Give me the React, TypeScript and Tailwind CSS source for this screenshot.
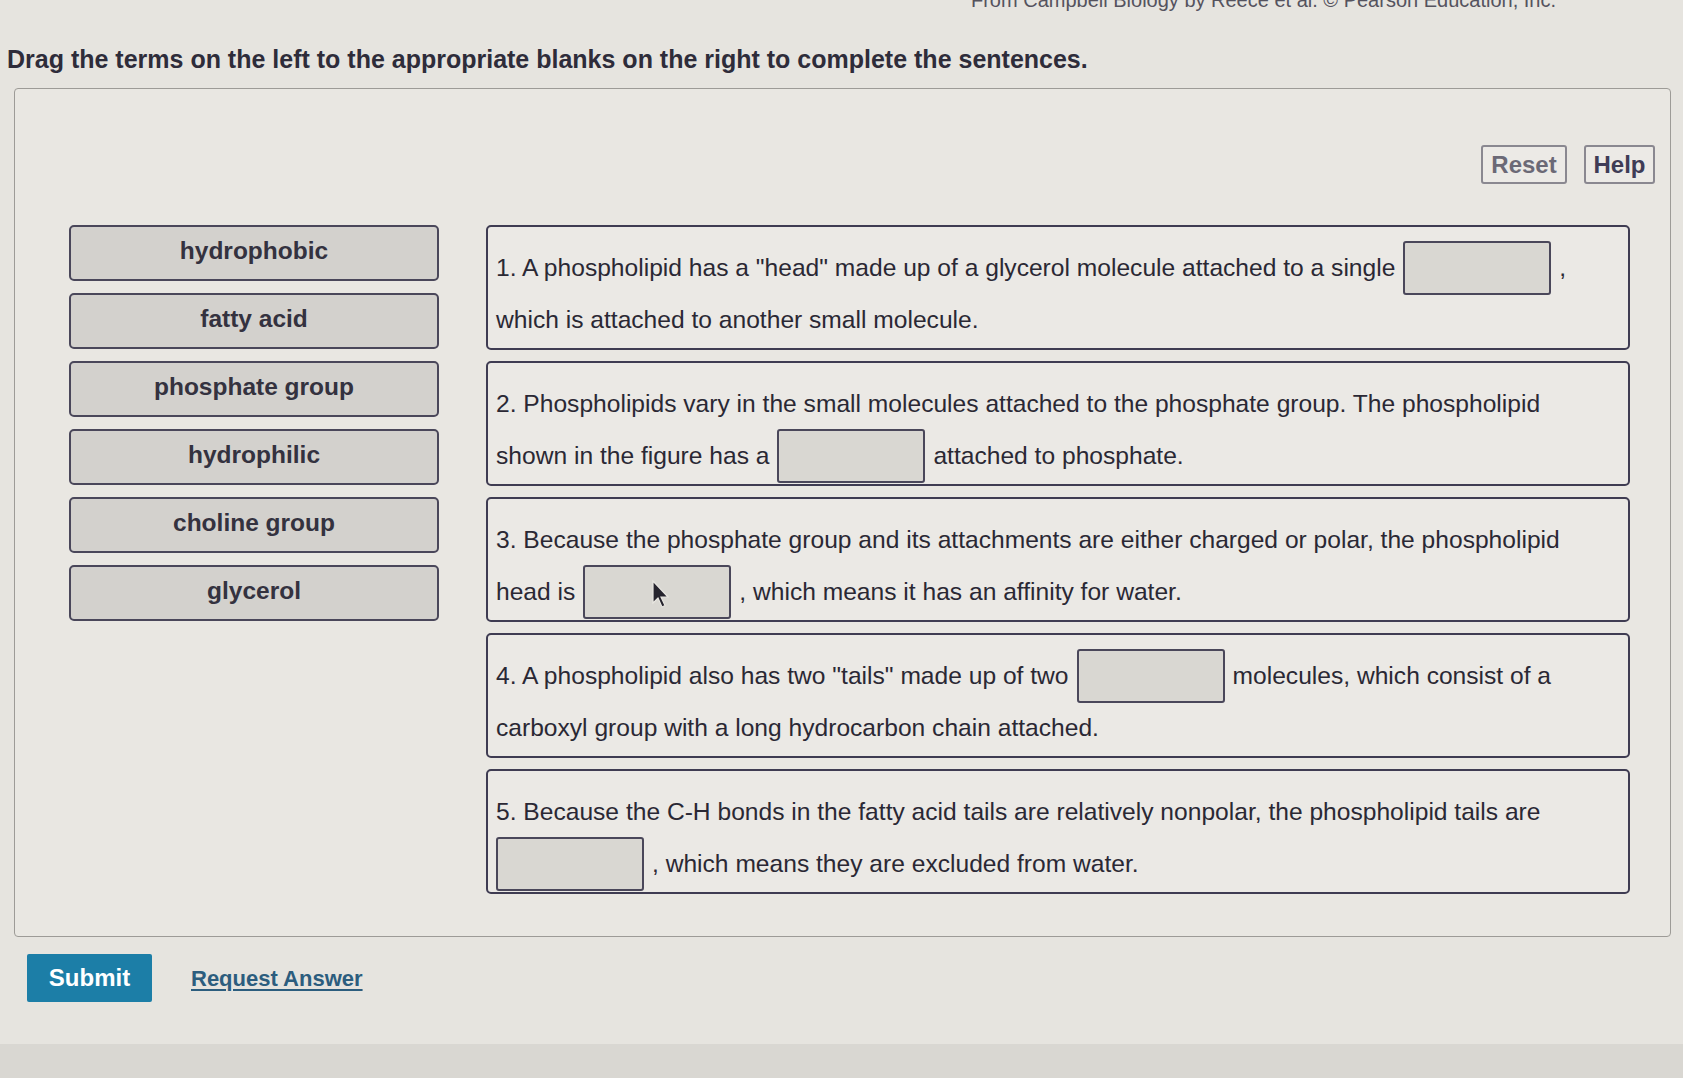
import { Fragment } from 'react';

type Part = string | { blank: true; cursor?: boolean };

const terms = ['hydrophobic', 'fatty acid', 'phosphate group', 'hydrophilic', 'choline group', 'glycerol'];

const sentences: Part[][][] = [
  [
    ['1. A phospholipid has a "head" made up of a glycerol molecule attached to a single', { blank: true }, ','],
    ['which is attached to another small molecule.'],
  ],
  [
    ['2. Phospholipids vary in the small molecules attached to the phosphate group. The phospholipid'],
    ['shown in the figure has a', { blank: true }, 'attached to phosphate.'],
  ],
  [
    ['3. Because the phosphate group and its attachments are either charged or polar, the phospholipid'],
    ['head is', { blank: true, cursor: true }, ', which means it has an affinity for water.'],
  ],
  [
    ['4. A phospholipid also has two "tails" made up of two', { blank: true }, 'molecules, which consist of a'],
    ['carboxyl group with a long hydrocarbon chain attached.'],
  ],
  [
    ['5. Because the C-H bonds in the fatty acid tails are relatively nonpolar, the phospholipid tails are'],
    [{ blank: true }, ', which means they are excluded from water.'],
  ],
];

function Blank({ cursor }: { cursor?: boolean }) {
  return (
    <span className="relative inline-block h-[54px] w-[148px] shrink-0 rounded-[3px] border-2 border-[#4a475a] bg-[#d9d7d2]">
      {cursor && (
        <svg className="absolute left-[66px] top-[12px]" width="20" height="30" viewBox="0 0 20 30">
          <path d="M2 2 L2 24 L7 19 L11 28 L14 26.5 L10 18 L17 18 Z" fill="#26242e" stroke="#e8e6e1" strokeWidth="1.2" />
        </svg>
      )}
    </span>
  );
}

export default function App() {
  return (
    <div className="flex h-[1078px] flex-col overflow-hidden bg-[#e6e4df] font-['Liberation_Sans',Arial,sans-serif] text-[#2a2834]">
      {/* credit line, mostly cut off by the top edge */}
      <div className="-mt-[12px] pr-[127px] text-right text-[20px] leading-[24px] text-[#55535e]">
        From Campbell Biology by Reece et al. © Pearson Education, Inc.
      </div>

      <h1 className="mt-[32px] pl-[7px] text-[25px] font-bold leading-[30px] text-[#2e2c3a]">
        Drag the terms on the left to the appropriate blanks on the right to complete the sentences.
      </h1>

      <div className="ml-[14px] mr-[12px] mt-[14px] rounded-[4px] border border-[#9d9b97] bg-[#e9e7e2] pb-[42px] pl-[54px] pr-[15px] pt-[56px]">
        <div className="flex justify-end gap-[17px]">
          <button className="h-[39px] w-[86px] rounded-[3px] border-2 border-[#8a8890] bg-[#eceae6] text-[24px] font-bold text-[#6b6976]">
            Reset
          </button>
          <button className="h-[39px] w-[71px] rounded-[3px] border-2 border-[#8a8890] bg-[#eceae6] text-[24px] font-bold text-[#3f3c56]">
            Help
          </button>
        </div>

        <div className="mt-[41px] flex items-start gap-[47px]">
          <div className="flex w-[370px] shrink-0 flex-col gap-[12px]">
            {terms.map((t) => (
              <div
                key={t}
                className="flex h-[56px] items-center justify-center rounded-[5px] border-2 border-[#4a475a] bg-[#d3d1cd] pb-[4px] text-[24.5px] font-bold text-[#34323f]"
              >
                {t}
              </div>
            ))}
          </div>

          <div className="flex w-[1144px] flex-col gap-[11px]">
            {sentences.map((lines, i) => (
              <div
                key={i}
                className="h-[125px] rounded-[5px] border-2 border-[#3f3c52] bg-[#ebe9e5] px-[8px] pt-[15px] text-[24.6px]"
              >
                {lines.map((line, j) => (
                  <div key={j} className="flex h-[52px] items-center gap-[8px] whitespace-nowrap">
                    {line.map((p, k) => (
                      <Fragment key={k}>
                        {typeof p === 'string' ? <span>{p}</span> : <Blank cursor={p.cursor} />}
                      </Fragment>
                    ))}
                  </div>
                ))}
              </div>
            ))}
          </div>
        </div>
      </div>

      <div className="mt-[17px] flex items-center gap-[39px] pl-[27px]">
        <button className="h-[48px] w-[125px] rounded-[2px] bg-[#1c7ea7] text-[24px] font-bold text-white">Submit</button>
        <a href="#" className="text-[22px] font-bold text-[#2c5d7e] underline underline-offset-[3px]">
          Request Answer
        </a>
      </div>

      <div className="mt-auto h-[34px] bg-[#d9d7d2]" />
    </div>
  );
}
